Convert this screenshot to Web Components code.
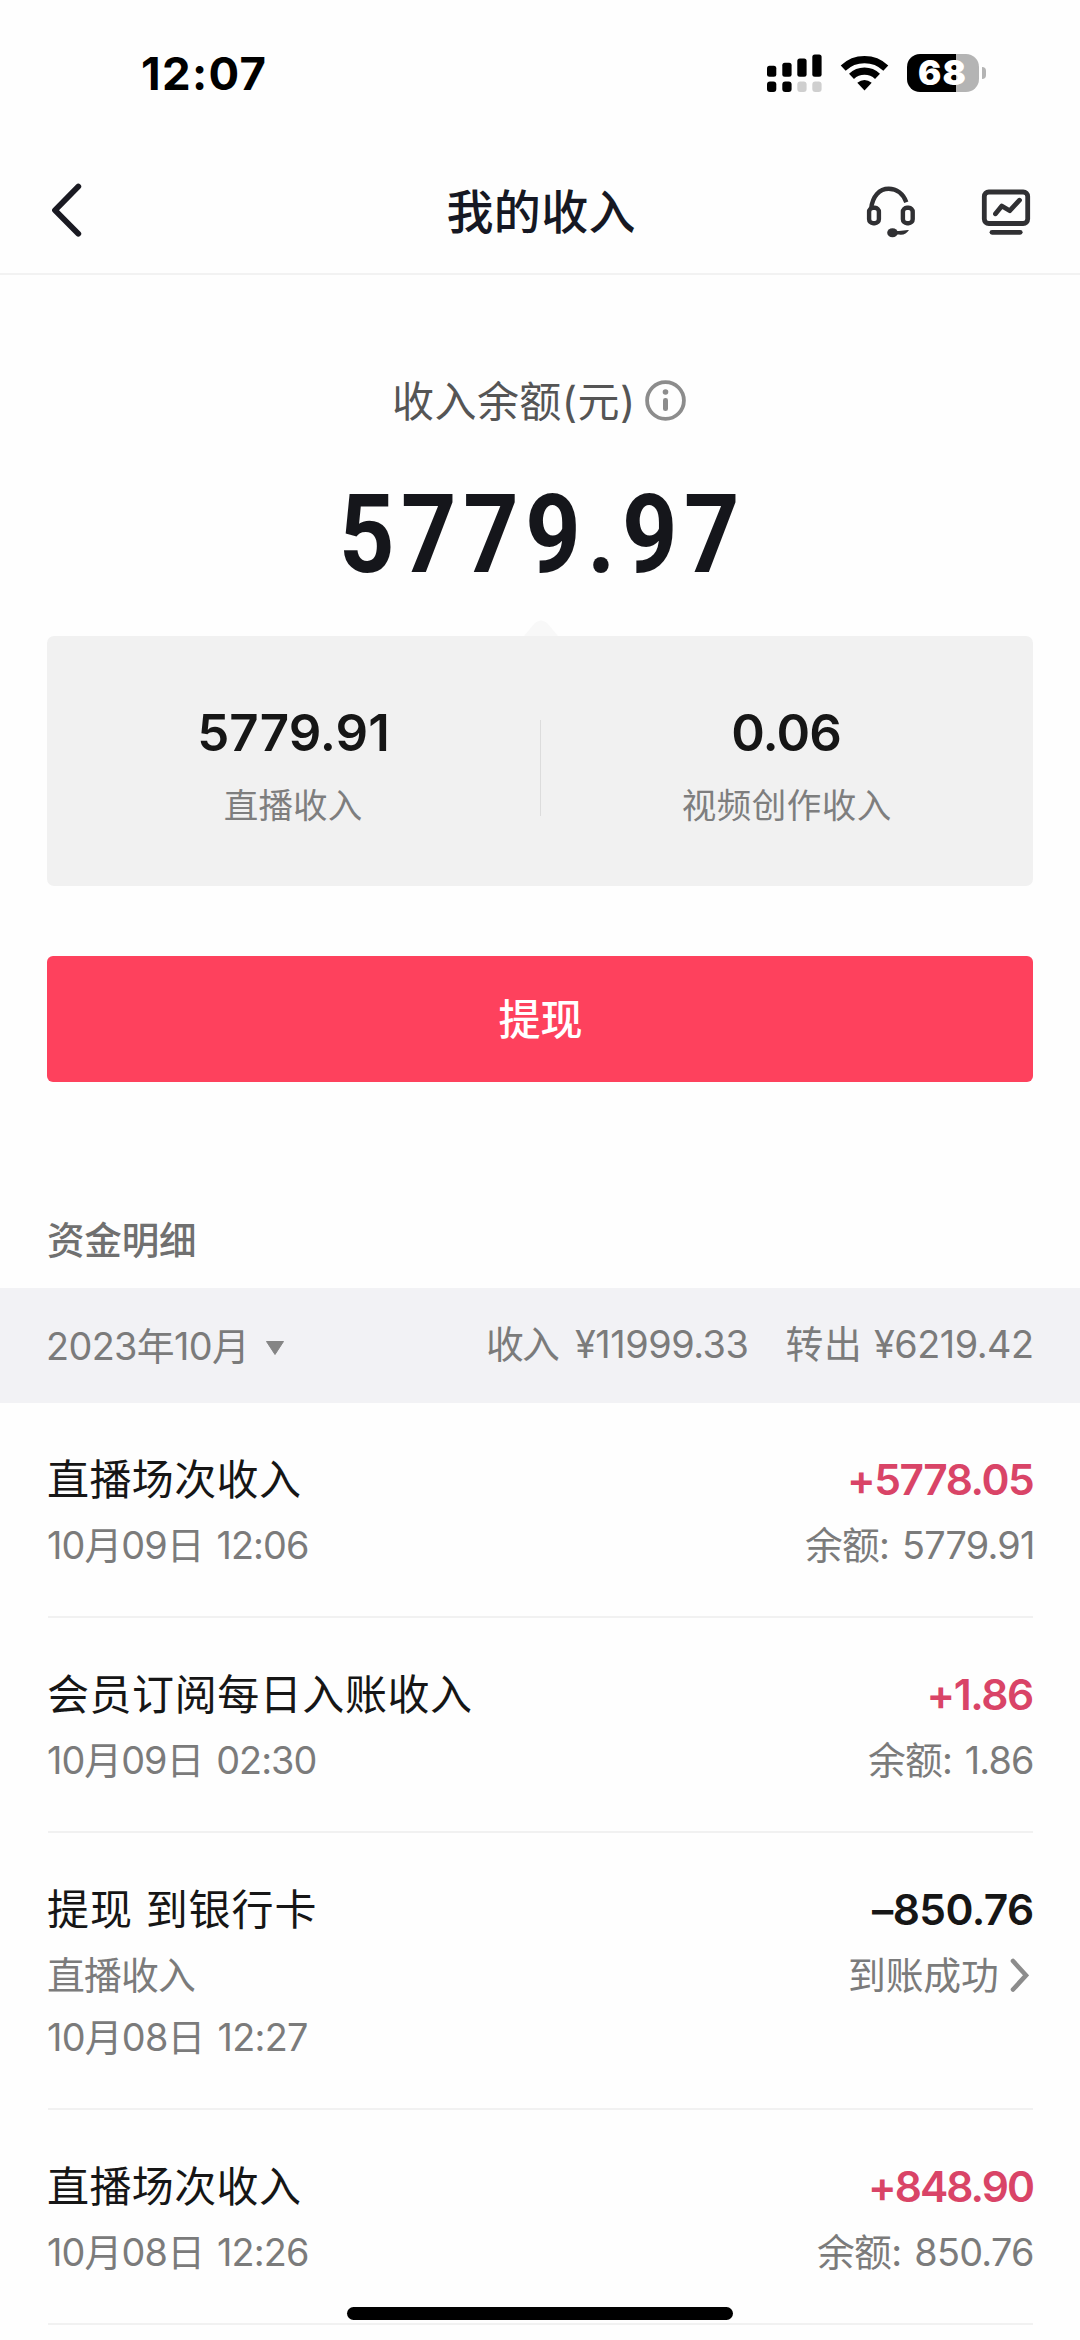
<!DOCTYPE html>
<html lang="zh-CN">
<head>
<meta charset="utf-8">
<title>我的收入</title>
<style>
  html, body { margin: 0; padding: 0; }
  body { width: 1080px; height: 2340px; overflow: hidden; background: #fefefe; font-family: Inter, "Noto Sans CJK SC", sans-serif; color: #161616; }
</style>
</head>
<body>
<income-page></income-page>

<script>
const define = (name, html, setup) => {
  const t = document.createElement('template');
  t.innerHTML = html;
  customElements.define(name, class extends HTMLElement {
    connectedCallback() {
      if (this.shadowRoot) return;
      this.attachShadow({ mode: 'open' }).appendChild(t.content.cloneNode(true));
      if (setup) setup(this, this.shadowRoot);
    }
  });
};

// Text tracked so that its ink fills exactly the width given in "w".
const ctx = document.createElement('canvas').getContext('2d');
define('fit-text', `
<style>:host{display:block;white-space:nowrap;flex:none}span{display:block;width:max-content;white-space:pre;transform-origin:0 50%}</style>
<span><slot></slot></span>`, (el, root) => {
  const cs = getComputedStyle(el), s = parseFloat(el.getAttribute('stretch') || 1);
  const w = parseFloat(el.getAttribute('w')), text = el.textContent;
  ctx.font = `${cs.fontWeight} ${cs.fontSize} ${cs.fontFamily}`;
  const m = ctx.measureText(text);
  const gaps = parseFloat(cs.wordSpacing) * (text.split(' ').length - 1) || 0;
  const ink = m.actualBoundingBoxLeft + m.actualBoundingBoxRight + gaps;
  const span = root.querySelector('span');
  el.style.width = w + 'px';
  span.style.letterSpacing = (w / s - ink) / (text.length - 1) + 'px';
  span.style.marginLeft = m.actualBoundingBoxLeft * s + 'px';
  if (s !== 1) span.style.transform = `scaleX(${s})`;
});

define('status-bar', `
<style>
:host{display:flex;height:145px;box-sizing:border-box;padding:47px 94px 0 143px;justify-content:space-between;align-items:flex-start}
fit-text{font-size:45.5px;font-weight:750;line-height:54px;color:#000}
.right{display:flex;height:51px;align-items:center}
svg{display:block}
.wifi{margin:0 18px 0 18px}
.bat{display:flex;align-items:center}
.cell{display:flex;width:72px;height:38px;border-radius:13px;background:linear-gradient(90deg,#000 49px,#b4b4b4 49px);box-sizing:border-box;padding-left:12px;align-items:center}
.cell fit-text{font-size:34.5px;font-weight:900;line-height:38px;color:#fff}
.tip{width:4px;height:12px;margin-left:3px;border-radius:0 5px 5px 0;background:#b4b4b4}
</style>
<fit-text w="121.5">12:07</fit-text>
<div class="right">
<svg width="55" height="38" viewBox="0 0 55 38"><rect y="11.7" width="9.3" height="11" rx="2.5"/><rect x="15.3" y="8.7" width="9.3" height="14" rx="2.5"/><rect x="30.3" y="4.4" width="9.3" height="18.3" rx="2.5"/><rect x="45.3" y=".4" width="9.3" height="22.3" rx="2.5"/><rect y="27.4" width="9.3" height="10.5" rx="3"/><rect x="15.3" y="27.4" width="9.3" height="10.5" rx="3"/><g fill="#cfcfcf"><rect x="30.3" y="27.4" width="9.3" height="10.5" rx="3"/><rect x="45.3" y="27.4" width="9.3" height="10.5" rx="3"/></g></svg>
<svg class="wifi" width="49" height="38" viewBox="0 0 49 38"><path d="M3.2 14.1 A31 31 0 0 1 45.8 14.1" fill="none" stroke="#000" stroke-width="7.2"/><path d="M11.5 22.3 A19 19 0 0 1 37.5 22.3" fill="none" stroke="#000" stroke-width="7.2"/><path d="M17.3 28.8 Q24.5 23.2 31.7 28.8 L24.5 36.4 Z"/></svg>
<div class="bat"><div class="cell"><fit-text w="46.5">68</fit-text></div><div class="tip"></div></div>
</div>`);

define('nav-bar', `
<style>
:host{display:flex;height:130px;box-sizing:border-box;padding:2px 48px 0 50px;align-items:center;justify-content:space-between;border-bottom:2px solid #f2f2f2}
.side{display:flex;width:190px;justify-content:flex-end;gap:61px}
.side.l{justify-content:flex-start}
svg{display:block}
fit-text{font-size:47px;font-weight:500;line-height:60px;color:#161823;padding-top:3px}
</style>
<div class="side l"><svg width="34" height="56" viewBox="0 0 34 56"><path d="M28.3 4.5 L5 28.2 L28.3 51.7" fill="none" stroke="#1a1a22" stroke-width="5.8" stroke-linecap="round" stroke-linejoin="round"/></svg></div>
<fit-text w="187">我的收入</fit-text>
<div class="side">
<svg width="56" height="56" viewBox="0 0 56 56" fill="none" stroke="#303033" stroke-width="4.4"><rect x="6.1" y="25.8" width="9.8" height="15.4" rx="4"/><rect x="39.9" y="25.8" width="9.8" height="15.4" rx="4"/><path d="M8.2 26.5 C9.5 14 16.5 6.8 25.7 6.8 C33.5 6.8 40.3 11.8 43.3 20.3"/><ellipse cx="29.5" cy="50.7" rx="5.3" ry="4.5" fill="#303033" stroke="none"/><path d="M29 49 H36 C39.5 49 42 47.8 46 48 C43.5 51.8 40.5 53.3 36 52.6 H29 Z" fill="#303033" stroke="none"/></svg>
<svg width="52" height="56" viewBox="0 0 52 56" fill="none" stroke="#303033" stroke-width="4.8" stroke-linecap="round" stroke-linejoin="round"><rect x="4.3" y="10" width="43.4" height="31.5" rx="4.5"/><path d="M15.5 31.8 L21.8 24 L29.8 28.7 L39.5 18.2"/><path d="M12 50.3 H40.2"/></svg>
</div>`);

define('balance-head', `
<style>
:host{display:flex;flex-direction:column;align-items:center;height:361px;box-sizing:border-box;padding-top:95px}
.label{display:flex;gap:14px;align-items:center;height:60px}
.label fit-text{font-size:42px;line-height:60px;color:#555;padding-top:3px}
.num{font-family:Roboto,sans-serif;font-weight:700;font-size:110px;line-height:130px;color:#15161b;margin-top:40px}
svg{display:block}
</style>
<div class="label"><fit-text w="237">收入余额(元)</fit-text>
<svg width="41" height="41" viewBox="0 0 41 41"><circle cx="20.5" cy="20.5" r="18.4" fill="none" stroke="#8c8c8c" stroke-width="3.8"/><circle cx="20.5" cy="12" r="2.8" fill="#8c8c8c"/><rect x="18" y="18" width="5" height="13" rx="2.3" fill="#8c8c8c"/></svg></div>
<fit-text class="num" w="392.5" stretch="0.88">5779.97</fit-text>`);

define('income-part', `
<style>
:host{display:flex;flex-direction:column;align-items:center;flex:1}
.n{font-size:51px;font-weight:570;line-height:60px;color:#161616;margin-top:67px}
.t{font-size:34.5px;line-height:46px;color:#7e7e7e;margin-top:20px}
</style><div class="n"><slot name="value"></slot></div><div class="t"><slot></slot></div>`);

define('income-card', `
<style>
:host{display:flex;position:relative;margin:0 47px;height:250px;border-radius:7px;background:#f1f1f1}
.tip{position:absolute;left:477px;top:-17px;width:34px;height:17px}
.line{width:1px;height:96px;margin-top:84px;background:#dcdcdc}
</style>
<svg class="tip" viewBox="0 0 34 17"><path d="M0 17 L11 4 Q17 -1 23 4 L34 17Z" fill="#f8f8f8"/></svg>
<income-part><fit-text slot="value" w="186">5779.91</fit-text><fit-text w="137">直播收入</fit-text></income-part>
<div class="line"></div>
<income-part><fit-text slot="value" w="107">0.06</fit-text><fit-text w="208">视频创作收入</fit-text></income-part>`);

define('withdraw-button', `
<style>:host{display:flex;margin:70px 47px 0;height:126px;border-radius:6px;background:#fe415d;align-items:center;justify-content:center;font-size:42px;font-weight:500;line-height:60px;color:#fff}fit-text{padding:2px 0 0 1px}</style>
<fit-text w="82">提现</fit-text>`);

define('month-bar', `
<style>
:host{display:flex;height:115px;background:#f2f2f5;padding:0 48px;align-items:center;font-size:37.8px;line-height:50px;color:#7b7b7b}
svg{margin:4px 0 0 21px}
.l{display:flex;align-items:center;margin-right:auto}
.r{display:flex;padding-bottom:4px}
.r fit-text + fit-text{margin-left:16px}
.r fit-text.out{margin-left:39px}
</style>
<div class="l"><fit-text w="196">2023年10月</fit-text><svg width="20" height="14" viewBox="0 0 20 14"><path d="M1.5 .5 H18.5 L10 13.5Z" fill="#858585" stroke="#858585" stroke-linejoin="round"/></svg></div>
<div class="r"><fit-text w="71">收入</fit-text><fit-text w="172.5">¥11999.33</fit-text><fit-text class="out" w="71.5">转出</fit-text><fit-text w="158">¥6219.42</fit-text></div>`);

define('fund-row', `
<style>
:host{display:flex;justify-content:space-between;margin:0 47px 0 48px;box-sizing:border-box;height:215px;padding-top:51px;border-bottom:2px solid #f1f1f1;font-size:37.8px;line-height:50px;color:#7b7b7b}
:host([tall]){height:277px}
.r{display:flex;flex-direction:column;align-items:flex-end}
::slotted([slot=title]){font-size:42px;line-height:52px;color:#161616;margin-bottom:14px}
::slotted([slot=amount]){font-size:42.5px;font-weight:570;line-height:52px;color:#d94467;margin-bottom:14px}
::slotted([slot=amount].out){color:#161616}
::slotted([slot=date]),::slotted([slot=balance]){word-spacing:3px}
::slotted([slot=sub]){margin-bottom:12px}
::slotted([slot=note]){display:flex;align-items:center;gap:13px;margin-right:4px}
</style>
<div><slot name="title"></slot><slot name="sub"></slot><slot name="date"></slot></div>
<div class="r"><slot name="amount"></slot><slot name="note"></slot><slot name="balance"></slot></div>`);

define('home-indicator', `<style>:host{display:block;position:absolute;left:347px;top:2307px;width:386px;height:13px;border-radius:7px;background:#000}</style>`);

define('income-page', `
<style>
:host{display:block;position:relative;width:1080px;height:2340px;overflow:hidden}
h2{margin:0;padding:133px 0 0 48px;height:73px;font-size:37.5px;font-weight:500;line-height:52px;color:#707070}
</style>
<status-bar></status-bar>
<nav-bar></nav-bar>
<balance-head></balance-head>
<income-card></income-card>
<withdraw-button></withdraw-button>
<h2><fit-text w="147">资金明细</fit-text></h2>
<month-bar></month-bar>
<fund-row><fit-text slot="title" w="252">直播场次收入</fit-text><fit-text slot="date" w="260">10月09日 12:06</fit-text><fit-text slot="amount" w="183">+5778.05</fit-text><fit-text slot="balance" w="228">余额: 5779.91</fit-text></fund-row>
<fund-row><fit-text slot="title" w="423">会员订阅每日入账收入</fit-text><fit-text slot="date" w="267.5">10月09日 02:30</fit-text><fit-text slot="amount" w="103.5">+1.86</fit-text><fit-text slot="balance" w="165">余额: 1.86</fit-text></fund-row>
<fund-row tall><fit-text slot="title" w="266.5">提现 到银行卡</fit-text><fit-text slot="sub" w="147">直播收入</fit-text><fit-text slot="date" w="259">10月08日 12:27</fit-text><fit-text class="out" slot="amount" w="161">–850.76</fit-text><div slot="note"><fit-text w="147">到账成功</fit-text><svg width="19" height="34" viewBox="0 0 19 34"><path d="M3 3 L16 17.3 L3 31.5" fill="none" stroke="#8c8c8c" stroke-width="4.6" stroke-linecap="round"/></svg></div></fund-row>
<fund-row><fit-text slot="title" w="252">直播场次收入</fit-text><fit-text slot="date" w="260">10月08日 12:26</fit-text><fit-text slot="amount" w="162">+848.90</fit-text><fit-text slot="balance" w="216">余额: 850.76</fit-text></fund-row>
<home-indicator></home-indicator>`);
</script>
</body>
</html>
